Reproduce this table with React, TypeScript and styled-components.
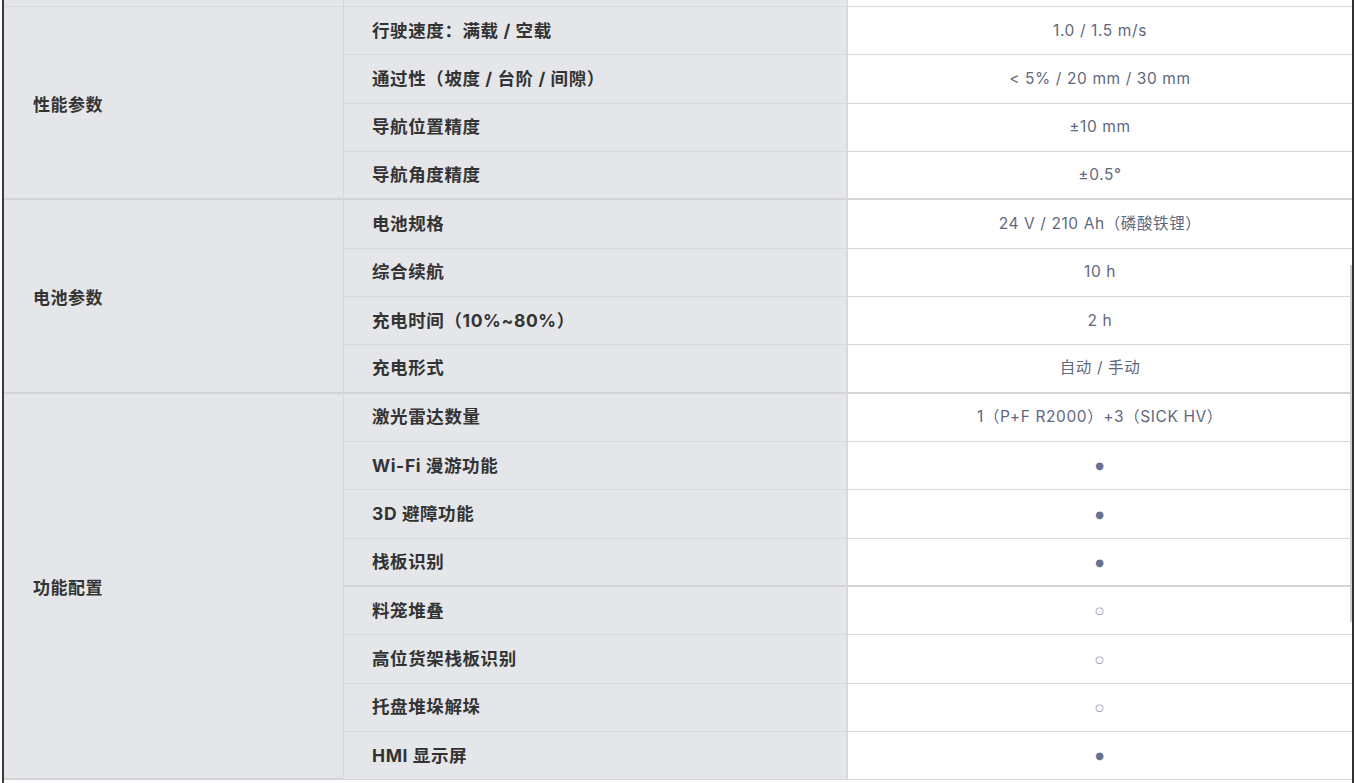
import React from 'react'
import styled, { createGlobalStyle, css } from 'styled-components'

const GREY_BG = '#e5e6e9'
const LINE = '#d7d8db'
const GROUP_LINE = '#d2d3d6'
const LABEL = '#333333'
const VALUE = '#5f687c'
const FONT = `Inter, "Noto Sans CJK SC", sans-serif`

const GlobalStyle = createGlobalStyle`
  html, body {
    margin: 0;
    padding: 0;
    background: #ffffff;
    overflow: hidden;
  }
`

const Frame = styled.div`
  position: relative;
  height: 783px;
  overflow: hidden;
  margin-left: 2px;
  width: 1352px;
  box-sizing: border-box;
  border-left: 2px solid #3b3b3b;
  border-right: 2px solid #2f2f2f;
`

const ScrollThumb = styled.div`
  position: absolute;
  right: 0;
  top: 265px;
  width: 2px;
  height: 357px;
  background: #cfcfcf;
`

const Table = styled.table`
  width: 100%;
  border-collapse: separate;
  border-spacing: 0;
  table-layout: fixed;
  font-family: ${FONT};
`

// the end of the previous group, cut off by the top of the view
const SpacerCell = styled.td<{ grey?: boolean }>`
  height: 6px;
  padding: 0;
  background: ${(p) => (p.grey ? GREY_BG : '#ffffff')};
  border-bottom: 1px solid ${LINE};
  border-right: ${(p) => (p.grey ? `1px solid ${LINE}` : '0')};
`

const CellBase = css<CellProps>`
  padding: 0;
  height: ${(p) => (p.thick ? '46.33px' : '47.33px')};
  line-height: 24px;
  border-bottom: ${(p) => (p.thick ? `2px solid ${GROUP_LINE}` : `1px solid ${LINE}`)};
  vertical-align: middle;
`

const GroupCell = styled.td<CellProps>`
  ${CellBase}
  background: ${GREY_BG};
  border-right: 1px solid ${LINE};
  padding: 4px 0 0 29px;
  font-size: 17px;
  font-weight: 700;
  color: ${LABEL};
  letter-spacing: 0.5px;
`

const NameCell = styled.td<CellProps>`
  ${CellBase}
  background: ${GREY_BG};
  border-right: 2px solid ${LINE};
  padding-left: 28px;
  font-size: 17.5px;
  font-weight: 700;
  color: ${LABEL};
  letter-spacing: 0.6px;
  white-space: nowrap;
`

const ValueCell = styled.td<CellProps>`
  ${CellBase}
  text-align: center;
  font-size: 15.5px;
  letter-spacing: 0.6px;
  color: ${VALUE};
  white-space: nowrap;
`

const Mark = styled.span<{ filled?: boolean }>`
  display: inline-block;
  line-height: 0;
  vertical-align: middle;
  font-family: "DejaVu Sans", sans-serif;
  font-size: 10px;
  color: ${(p) => (p.filled ? '#68718d' : '#7d8496')};
`

const groups: SpecGroup[] = [
  {
    name: '性能参数',
    rows: [
      { name: '行驶速度：满载 / 空载', value: '1.0 / 1.5 m/s' },
      { name: '通过性（坡度 / 台阶 / 间隙）', value: '< 5% / 20 mm / 30 mm' },
      { name: '导航位置精度', value: '±10 mm' },
      { name: '导航角度精度', value: '±0.5°', thick: true }
    ]
  },
  {
    name: '电池参数',
    rows: [
      { name: '电池规格', value: '24 V / 210 Ah（磷酸铁锂）' },
      { name: '综合续航', value: '10 h' },
      { name: '充电时间（10%~80%）', value: '2 h' },
      { name: '充电形式', value: '自动 / 手动', thick: true }
    ]
  },
  {
    name: '功能配置',
    rows: [
      { name: '激光雷达数量', value: '1（P+F R2000）+3（SICK HV）' },
      { name: 'Wi-Fi 漫游功能', mark: 'full' },
      { name: '3D 避障功能', mark: 'full' },
      { name: '栈板识别', mark: 'full', thick: true },
      { name: '料笼堆叠', mark: 'empty' },
      { name: '高位货架栈板识别', mark: 'empty' },
      { name: '托盘堆垛解垛', mark: 'empty' },
      { name: 'HMI 显示屏', mark: 'full' }
    ]
  }
]

const App: React.FC = () => {
  return (
    <>
      <GlobalStyle />
      <Frame>
        <Table>
          <colgroup>
            <col style={{ width: 340 }} />
            <col style={{ width: 504 }} />
            <col />
          </colgroup>
          <tbody>
            <tr>
              <SpacerCell grey />
              <SpacerCell grey />
              <SpacerCell />
            </tr>
            {groups.map((group) =>
              group.rows.map((row, index) => (
                <tr key={group.name + row.name}>
                  {index === 0 && (
                    <GroupCell rowSpan={group.rows.length} thick>
                      {group.name}
                    </GroupCell>
                  )}
                  <NameCell thick={row.thick}>{row.name}</NameCell>
                  <ValueCell thick={row.thick}>
                    {row.mark ? (
                      <Mark filled={row.mark === 'full'}>{row.mark === 'full' ? '●' : '○'}</Mark>
                    ) : (
                      row.value
                    )}
                  </ValueCell>
                </tr>
              ))
            )}
          </tbody>
        </Table>
        <ScrollThumb />
      </Frame>
    </>
  )
}

interface CellProps {
  thick?: boolean
}

interface SpecRow {
  name: string
  value?: string
  mark?: 'full' | 'empty'
  thick?: boolean
}

interface SpecGroup {
  name: string
  rows: SpecRow[]
}

export default App
